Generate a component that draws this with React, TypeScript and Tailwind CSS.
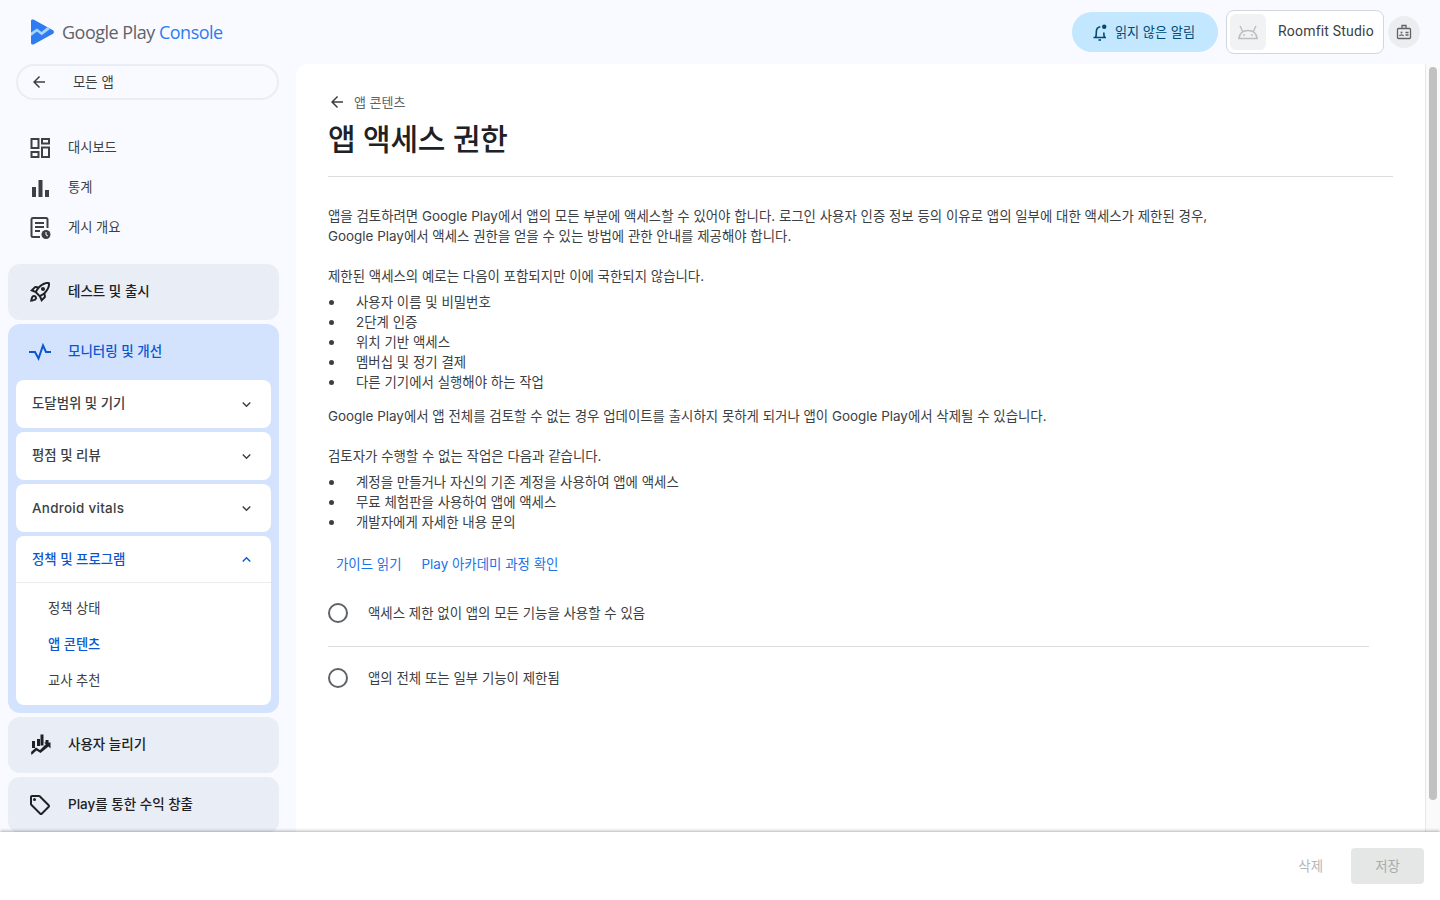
import React from "react";
import { MdArrowBack, MdOutlineRocketLaunch, MdOutlineLocalOffer, MdKeyboardArrowDown, MdKeyboardArrowUp } from "react-icons/md";

const F = { fontFamily: 'Inter, "Noto Sans CJK KR", sans-serif' };

const Dash = () => (
  <svg width="24" height="24" viewBox="0 0 24 24" fill="none" stroke="#3c4043" strokeWidth="2"><rect x="3.500" y="3" width="7" height="9" /><rect x="14" y="3" width="7" height="4.500" /><rect x="3.500" y="16" width="7" height="5" /><rect x="14" y="11.500" width="7" height="9.500" /></svg>
);
const Bars = () => (
  <svg width="24" height="24" viewBox="0 0 24 24" fill="#3c4043"><rect x="4" y="11" width="4" height="10" /><rect x="10.500" y="4" width="4" height="17" /><rect x="17" y="14" width="4" height="7" /></svg>
);
const Publish = () => (
  <svg width="24" height="24" viewBox="0 0 24 24" fill="none"><path d="M12 21H5a1.500 1.500 0 0 1-1.500-1.500v-16A1.500 1.500 0 0 1 5 2h13a1.500 1.500 0 0 1 1.500 1.500V12" stroke="#3c4043" strokeWidth="2" /><path d="M7 7h9M7 11h9M7 15h5" stroke="#3c4043" strokeWidth="2" /><circle cx="18" cy="18.500" r="4.500" fill="#3c4043" /><path d="M18 16v3l2 1" stroke="#fff" strokeWidth="1" /></svg>
);
const Pulse = () => (
  <svg width="24" height="24" viewBox="0 0 24 24" fill="none" stroke="#0b57d0" strokeWidth="2"><path d="M1 12h6l3.500 6.500L15 5.500l3 6.500h5" /></svg>
);
const Growth = () => (
  <svg width="24" height="24" viewBox="0 0 24 24" fill="#202124"><rect x="4" y="8" width="3" height="7" /><rect x="9" y="6" width="3" height="7" /><rect x="12.500" y="1.500" width="3" height="11" /><rect x="17.500" y="7" width="3" height="4" /><path d="M3 19l5-4.500 4 2.500 6-6-2-1.500h6.500V15.500L20.500 13.500 12.500 20l-4-2.500L3.500 22z" /></svg>
);
const Bell = () => (
  <svg width="20" height="20" viewBox="0 0 20 20" fill="none" stroke="#004a77" strokeWidth="1.600"><path d="M3.500 15.500h12.500M5.500 15.500c1-1.500 .8-3.500 .8-5.500 0-2.800 1.500-4.800 4-5.200M14.500 15.500c-.6-1.500-.7-3-.7-5" /><path d="M8.500 18h2.500" /><circle cx="14.200" cy="4.800" r="2.200" fill="#004a77" stroke="none" /></svg>
);
const Android = () => (
  <svg width="22" height="16" viewBox="0 0 22 16" fill="none" stroke="#bdbdbd" strokeWidth="1.400"><path d="M1 14.500h20M2 14.500C2.500 9.500 6 6.500 11 6.500s8.500 3 9 8" /><path d="M6 8 3 2M16 8l3-6" /><circle cx="7" cy="11" r=".9" fill="#bdbdbd" stroke="none" /><circle cx="15" cy="11" r=".9" fill="#bdbdbd" stroke="none" /></svg>
);
const Badge = () => (
  <svg width="18" height="18" viewBox="0 0 18 18" fill="none" stroke="#5f6368" strokeWidth="1.300"><rect x="2.500" y="5.500" width="13" height="10" rx="1" /><path d="M7 5.500V2.500h4v3" /><circle cx="6.500" cy="9.500" r="1" fill="#5f6368" stroke="none" /><path d="M4.500 13c.5-1.500 3.500-1.500 4 0M10.500 9.500h3M10.500 12h3" /></svg>
);
const Logo = () => (
  <svg width="24" height="26" viewBox="0 0 24 26"><path d="M2.500 .6 22 11.300a2 2 0 0 1 0 3.400L2.500 25.400A1.700 1.700 0 0 1 0 24V2A1.700 1.700 0 0 1 2.500 .6z" fill="#2e7cf0" /><path d="M0 13.500 6 9.500l4.500 3.500 6-5 2.500 2-8.300 6.200L6 12.500 0 17z" fill="#a9d4fb" /></svg>
);

function Top({ icon, label, active }: { icon: React.ReactNode; label: string; active?: boolean }) {
  return (
    <div className={`h-14 flex items-center rounded-xl pl-5 ${active ? "" : "bg-[#e9edf5]"}`}>
      <span className="w-6 flex justify-center mr-4">{icon}</span>
      <span className={`text-[13.5px] font-medium mb-[2px] ${active ? "text-[#0b57d0]" : "text-[#202124]"}`}>{label}</span>
    </div>
  );
}

function Sub({ label }: { label: string }) {
  return (
    <div className="h-12 bg-white rounded-lg flex items-center justify-between pl-4 pr-[16px]">
      <span className="text-[13.4px] font-medium text-[#3c4043] mb-[2px]">{label}</span>
      <MdKeyboardArrowDown size={17} color="#3c4043" />
    </div>
  );
}

function Bullets({ items }: { items: string[] }) {
  return (
    <div className="mt-[6px] flex flex-col">
      {items.map((t) => (
        <div key={t} className="h-5 flex items-center">
          <span className="w-[5px] h-[5px] rounded-full bg-[#3c4043] ml-[1px] mr-[22px]" />
          <span>{t}</span>
        </div>
      ))}
    </div>
  );
}

function Radio({ label }: { label: string }) {
  return (
    <div className="flex items-center h-5">
      <span className="w-5 h-5 rounded-full border-2 border-[#5f6368] mr-5 shrink-0" />
      <span>{label}</span>
    </div>
  );
}

export default function App() {
  return (
    <div className="w-[1440px] h-[900px] flex flex-col overflow-hidden bg-[#f8faff] text-[#3c4043] text-[13.43px] leading-5" style={F}>
      <div className="flex-1 min-h-0 flex flex-col relative">
        <header className="h-16 shrink-0 flex items-center pl-[31px] pr-5">
          <Logo />
          <span className="ml-[7px] text-[18px] tracking-[-0.5px] text-[#5f6368]" style={{ fontFamily: "'Open Sans', sans-serif" }}>
            Google Play <span className="text-[#2e7cf0]">Console</span>
          </span>
          <div className="ml-auto flex items-center">
            <div className="w-[146px] h-10 rounded-full bg-[#c2e7ff] flex items-center justify-center text-[#004a77] text-[13.2px] pr-[2px]">
              <span className="mr-[5px] ml-[-3px]"><Bell /></span><span className="mb-[1px]">읽지 않은 알림</span>
            </div>
            <div className="ml-2 w-[158px] h-11 rounded-lg border border-[#d3d6dc] bg-white flex items-center pl-[3px]">
              <span className="w-9 h-9 rounded-md bg-[#f1f2f3] flex items-center justify-center"><Android /></span>
              <span className="ml-3 mb-[2px] text-[#3c4043] text-[14px] tracking-[0.2px]" style={{ fontFamily: "Roboto, sans-serif" }}>Roomfit Studio</span>
            </div>
            <span className="ml-1 w-8 h-8 rounded-full bg-[#ebedef] flex items-center justify-center"><Badge /></span>
          </div>
        </header>

        <div className="flex-1 min-h-0 flex">
          <aside className="w-[296px] shrink-0 overflow-hidden">
            <div className="mx-4 w-[263px] h-9 rounded-full border-2 border-[#e9edf5] flex items-center pl-[12px]">
              <MdArrowBack size={18} color="#3c4043" />
              <span className="ml-[25px]">모든 앱</span>
            </div>
            <div className="mt-7 mb-4 flex flex-col pl-[28px]">
              {[[<Dash key="a" />, "대시보드"], [<Bars key="b" />, "통계"], [<Publish key="c" />, "게시 개요"]].map(([i, l], n) => (
                <div key={n} className="h-10 flex items-center">
                  <span className="w-6 mr-4 flex justify-center">{i}</span>
                  <span className="text-[13.25px] mb-[2px]">{l}</span>
                </div>
              ))}
            </div>
            <div className="ml-2 w-[271px] flex flex-col gap-1 pb-4">
              <Top icon={<MdOutlineRocketLaunch size={24} color="#202124" />} label="테스트 및 출시" />
              <div className="bg-[#d3e3fd] rounded-xl pb-2">
                <Top active icon={<Pulse />} label="모니터링 및 개선" />
                <div className="mx-2 flex flex-col gap-1">
                  <Sub label="도달범위 및 기기" />
                  <Sub label="평점 및 리뷰" />
                  <div className="h-12 bg-white rounded-lg flex items-center justify-between pl-4 pr-[16px]">
                    <span className="text-[13.4px] font-medium text-[#3c4043] tracking-[0.3px]">Android vitals</span>
                    <MdKeyboardArrowDown size={17} color="#3c4043" />
                  </div>
                  <div className="bg-white rounded-lg">
                    <div className="h-[47px] flex items-center justify-between pl-4 pr-[16px] border-b border-[#ececec]">
                      <span className="text-[13.4px] font-medium text-[#0b57d0]">정책 및 프로그램</span>
                      <MdKeyboardArrowUp size={17} color="#0b57d0" />
                    </div>
                    <div className="py-[7px] pl-8 text-[13.25px]">
                      <div className="h-9 flex items-center">정책 상태</div>
                      <div className="h-9 flex items-center text-[#0b57d0] font-medium">앱 콘텐츠</div>
                      <div className="h-9 flex items-center">교사 추천</div>
                    </div>
                  </div>
                </div>
              </div>
              <Top icon={<Growth />} label="사용자 늘리기" />
              <Top icon={<MdOutlineLocalOffer size={24} color="#202124" />} label="Play를 통한 수익 창출" />
            </div>
          </aside>

          <main className="flex-1 min-w-0 bg-white rounded-tl-xl flex">
            <div className="flex-1 min-w-0 pl-8 pr-8 pt-[28px]">
              <div className="flex items-center h-5 text-[13px] text-[#5f6368]">
                <MdArrowBack size={18} color="#3c4043" />
                <span className="ml-2">앱 콘텐츠</span>
              </div>
              <h1 className="mt-[7px] text-[30px] leading-10 font-medium text-[#202124] tracking-[-0.25px]">앱 액세스 권한</h1>
              <div className="mt-[17px] h-px bg-[#dadce0]" />
              <p className="mt-[29px]">
                앱을 검토하려면 Google Play에서 앱의 모든 부분에 액세스할 수 있어야 합니다. 로그인 사용자 인증 정보 등의 이유로 앱의 일부에 대한 액세스가 제한된 경우,
                <br />
                Google Play에서 액세스 권한을 얻을 수 있는 방법에 관한 안내를 제공해야 합니다.
              </p>
              <p className="mt-5">제한된 액세스의 예로는 다음이 포함되지만 이에 국한되지 않습니다.</p>
              <Bullets items={["사용자 이름 및 비밀번호", "2단계 인증", "위치 기반 액세스", "멤버십 및 정기 결제", "다른 기기에서 실행해야 하는 작업"]} />
              <p className="mt-[14px]">Google Play에서 앱 전체를 검토할 수 없는 경우 업데이트를 출시하지 못하게 되거나 앱이 Google Play에서 삭제될 수 있습니다.</p>
              <p className="mt-5">검토자가 수행할 수 없는 작업은 다음과 같습니다.</p>
              <Bullets items={["계정을 만들거나 자신의 기존 계정을 사용하여 앱에 액세스", "무료 체험판을 사용하여 앱에 액세스", "개발자에게 자세한 내용 문의"]} />
              <div className="mt-[22px] pl-2 flex gap-5 text-[#1a73e8]">
                <span>가이드 읽기</span>
                <span>Play 아카데미 과정 확인</span>
              </div>
              <div className="mt-[29px] mr-6">
                <Radio label="액세스 제한 없이 앱의 모든 기능을 사용할 수 있음" />
                <div className="mt-[23px] mb-[21px] h-px bg-[#dadce0]" />
                <Radio label="앱의 전체 또는 일부 기능이 제한됨" />
              </div>
            </div>
            <div className="w-[15px] shrink-0 bg-[#fafafa] border-l border-[#e8e8e8] pl-[3px] pt-[3px]">
              <div className="w-2 h-[733px] rounded-full bg-[#c1c1c1]" />
            </div>
          </main>
        </div>
      </div>

      <footer className="relative h-[68px] shrink-0 bg-white shadow-[0_-1px_3px_rgba(0,0,0,0.3)] flex items-center justify-end pr-4">
        <span className="text-[#b4b6b9] mr-7">삭제</span>
        <span className="w-[73px] h-9 rounded bg-[#e5e7e7] text-[#a8abad] flex items-center justify-center">저장</span>
      </footer>
    </div>
  );
}
